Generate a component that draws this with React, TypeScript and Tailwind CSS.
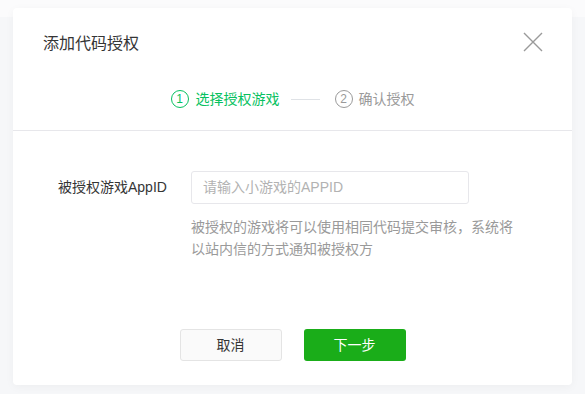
export default function App() {
  return (
    <div
      className="relative h-[394px] w-[585px] overflow-hidden bg-[#f6f7f9]"
      style={{ fontFamily: '"Liberation Sans", "Noto Sans CJK SC", sans-serif' }}
    >
      <div className="h-[17px] bg-[#fbfbfc]" />
      <div className="absolute left-[13px] top-[8px] flex h-[377px] w-[559px] flex-col rounded-[4px] bg-white shadow-[0_2px_10px_rgba(0,0,0,.04)]">
        <div className="flex items-center justify-between pl-[30px] pr-[29px] pt-[25px]">
          <h3 className="text-[16px] leading-[22px] text-[#353535]">添加代码授权</h3>
          <svg width="20" height="20" viewBox="0 0 20 20" className="mt-[-4px]">
            <path d="M1 1L19 19M19 1L1 19" stroke="#9a9a9a" strokeWidth="1.4" fill="none" />
          </svg>
        </div>

        <div className="mt-[34px] flex items-center justify-center text-[14px] leading-[20px]">
          <span className="flex items-center text-[#07c160]">
            <span className="mr-[7px] flex h-[18px] w-[18px] items-center justify-center rounded-full border border-[#07c160] text-[12px] leading-none">1</span>
            选择授权游戏
          </span>
          <span className="ml-[11px] mr-[15px] h-[1px] w-[29px] bg-[#dfe2e6]" />
          <span className="flex items-center text-[#9a9a9a]">
            <span className="mr-[6px] flex h-[18px] w-[18px] items-center justify-center rounded-full border border-[#9a9a9a] text-[12px] leading-none">2</span>
            确认授权
          </span>
        </div>

        <div className="mt-[21px] h-[1px] bg-[#e7e7eb]" />

        <div className="mt-[40px] flex items-start pl-[45px]">
          <label className="mt-[6px] w-[133px] text-[14px] leading-[20px] text-[#353535]">被授权游戏AppID</label>
          <div>
            <div className="flex h-[33px] w-[278px] items-center rounded-[3px] border border-[#e7e7eb] px-[11px] text-[14px] text-[#b2b2b2]">
              请输入小游戏的APPID
            </div>
            <p className="mt-[12px] w-[326px] text-[14px] leading-[22px] text-[#9a9a9a]">
              被授权的游戏将可以使用相同代码提交审核，系统将以站内信的方式通知被授权方
            </p>
          </div>
        </div>

        <div className="mt-auto mb-[24px] flex justify-center gap-[22px]">
          <button className="h-[32px] w-[102px] rounded-[3px] border border-[#e4e4e4] bg-[#fafafa] text-[14px] text-[#353535]">
            取消
          </button>
          <button className="h-[32px] w-[102px] rounded-[3px] bg-[#1aad19] text-[14px] text-white">
            下一步
          </button>
        </div>
      </div>
    </div>
  );
}
